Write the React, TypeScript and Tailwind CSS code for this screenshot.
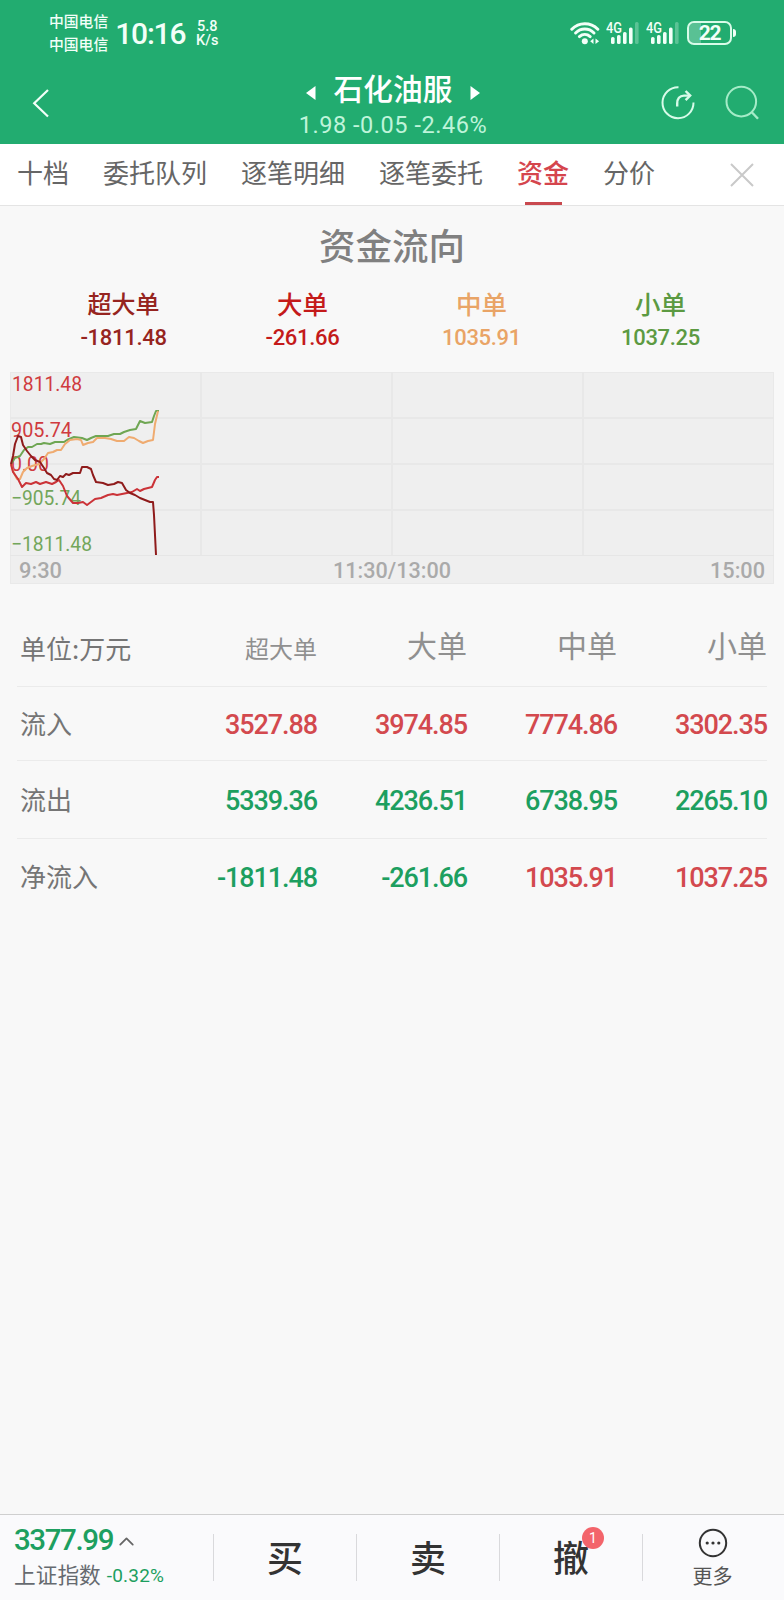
import { ChevronUp } from 'lucide-react';

interface FlowItem {
  name: string;
  net: string;
  inflow: string;
  outflow: string;
  color: string;
  nameSize: string;
  headSize: string;
}

const flows: FlowItem[] = [
  { name: '超大单', net: '-1811.48', inflow: '3527.88', outflow: '5339.36', color: 'text-[#962420]', nameSize: 'text-[24px]', headSize: 'text-[24px] pt-[1px]' },
  { name: '大单', net: '-261.66', inflow: '3974.85', outflow: '4236.51', color: 'text-[#c41a1a]', nameSize: 'text-[25.5px]', headSize: 'text-[30px] pb-[6px]' },
  { name: '中单', net: '1035.91', inflow: '7774.86', outflow: '6738.95', color: 'text-[#e9a466]', nameSize: 'text-[25.5px]', headSize: 'text-[30px] pb-[6px]' },
  { name: '小单', net: '1037.25', inflow: '3302.35', outflow: '2265.10', color: 'text-[#5c9a42]', nameSize: 'text-[25.5px]', headSize: 'text-[30px] pb-[6px]' },
];

const tabs = ['十档', '委托队列', '逐笔明细', '逐笔委托', '资金', '分价'];

const latin = "font-['Roboto','Noto_Sans_CJK_SC',sans-serif]";

const Signal = () => (
  <svg width="34" height="26" viewBox="0 0 34 26" fill="#f2fff8">
    <text x="0" y="12.5" fontSize="14.5" fontWeight="500" textLength="16" lengthAdjust="spacingAndGlyphs" className={latin}>4G</text>
    <rect x="5" y="17" width="3.6" height="7" rx="1.6" />
    <rect x="11" y="15" width="3.6" height="9" rx="1.6" />
    <rect x="17" y="12" width="3.6" height="12" rx="1.6" />
    <rect x="23" y="7.5" width="3.6" height="16.5" rx="1.6" />
    <rect x="29" y="2" width="3.6" height="22" rx="1.6" opacity="0.28" />
  </svg>
);

const StatusBar = () => (
  <div className="flex h-[66px] items-center pl-[49px] pr-[48px] text-[#f2fff8]">
    <div className="-mt-[2px] flex flex-col text-[14.8px] font-medium leading-[23px]">
      <span>中国电信</span>
      <span>中国电信</span>
    </div>
    <span className={`${latin} ml-[7px] mt-[2px] w-[72px] text-[30px] font-medium leading-[36px] tracking-[-1.2px]`}>10:16</span>
    <div className={`${latin} ml-[8px] mt-[2px] flex w-[24px] flex-col items-center text-[14.5px] font-medium leading-[14px]`}>
      <span>5.8</span>
      <span>K/s</span>
    </div>
    <div className="ml-auto flex items-center">
      <svg width="30" height="26" viewBox="0 0 30 26" fill="none" stroke="#f2fff8" strokeWidth="3" strokeLinecap="round">
        <path d="M1.8 9.2C9 1.8 20.5 1.8 27.8 9.2" />
        <path d="M5.6 13C11 7.8 18.6 7.8 24 13" />
        <path d="M9.4 16.6C12.6 13.8 17 13.8 20.2 16.6" />
        <circle cx="14.8" cy="21.2" r="3" fill="#f2fff8" stroke="none" />
        <path d="M23.5 18.5v5.5l-3.3-2.7zM25.5 18.5v5.5l3.6-2.7z" fill="#f2fff8" stroke="none" />
      </svg>
      <div className="ml-[6px] flex gap-[6px]">
        <Signal />
        <Signal />
      </div>
      <div className="ml-[7px] flex items-center">
        <div className="relative flex h-[24px] w-[45px] items-center justify-center overflow-hidden rounded-[7px] border-2 border-[#d8fbe8]">
          <div className="absolute left-0 top-0 h-full w-[12px] bg-white/25" />
          <span className={`${latin} relative text-[21px] font-bold leading-[22px] tracking-[-1.2px]`}>22</span>
        </div>
        <div className="ml-[1px] h-[8px] w-[3px] rounded-r-[3px] bg-[#f2fff8]" />
      </div>
    </div>
  </div>
);

const StockHeader = () => (
  <div className="flex h-[78px] items-start justify-between pl-[32px] pr-[23px]">
    <div className="w-[94px] pt-[22px]">
      <svg width="20" height="30" viewBox="0 0 20 30" fill="none" stroke="#f2fff8" strokeWidth="2.2">
        <path d="M16 2L2.2 15.3L16 28.5" />
      </svg>
    </div>
    <div className="flex flex-col items-center">
      <div className="flex items-center gap-[18px] text-white">
        <svg width="10" height="14" viewBox="0 0 10 14" className="mt-[11px]"><path d="M9.5 0V14L0 7z" fill="currentColor" /></svg>
        <h1 className="text-[29.7px] font-medium leading-[43px]">石化油服</h1>
        <svg width="10" height="14" viewBox="0 0 10 14" className="mt-[11px]"><path d="M.5 0V14L10 7z" fill="currentColor" /></svg>
      </div>
      <div className={`${latin} mt-[2px] text-[23.5px] leading-[28px] tracking-[0.55px] text-[#bff4da]`}>1.98 -0.05 -2.46%</div>
    </div>
    <div className="flex gap-[29px] pt-[19px]">
      <svg width="36" height="36" viewBox="0 0 36 36" fill="none" stroke="#d8fbe9" strokeWidth="2">
        <path d="M18.5 2.2A15.5 15.5 0 1 0 33.5 17.5" />
        <path d="M17.2 21.5V18.5C17.2 13.5 19.5 10.6 24 10.6H30" strokeWidth="2.4" />
        <path d="M25.6 6L30.2 10.6L25.6 15.2" strokeWidth="2.4" />
      </svg>
      <svg width="36" height="36" viewBox="0 0 36 36" fill="none" stroke="#a5ecc8" strokeWidth="2">
        <circle cx="16.3" cy="16.6" r="14.8" />
        <path d="M26.8 27.2L33 33.8" strokeWidth="2.4" />
      </svg>
    </div>
  </div>
);

const TabBar = () => (
  <nav className="flex h-[62px] border-b border-[#e4e4e4] bg-white pl-[17px] pr-[30px] text-[26px] text-[#666]">
    <div className="flex gap-[34px]">
      {tabs.map((tab) => {
        const active = tab === '资金';
        return (
          <div key={tab} className={`flex flex-col items-center whitespace-nowrap ${active ? 'font-medium text-[#d5454d]' : ''}`}>
            <span className="h-[58px] leading-[56px]">{tab}</span>
            {active && <span className="h-[3px] w-[37px] bg-[#c9494f]" />}
          </div>
        );
      })}
    </div>
    <svg width="24" height="24" viewBox="0 0 24 24" className="ml-auto mt-[19px]" stroke="#c9c9c9" strokeWidth="2">
      <path d="M1 1L23 23M23 1L1 23" />
    </svg>
  </nav>
);

const FlowChart = () => (
  <svg width="764" height="213" viewBox="10 372 764 213" fill="none" className={`mx-[10px] block ${latin}`}>
    <rect x="10.5" y="372.5" width="763" height="211" fill="#efefef" stroke="#e9e9e9" />
    <path d="M10 418H774M10 464H774M10 510H774M201 372V555M392 372V555M583 372V555" stroke="#e8e8e8" strokeWidth="2" />
    <path d="M10 555.5H774" stroke="#e6e6e6" />

    {/* value labels */}
    <g fontSize="21" fill="#d03b3e">
      <text x="12" y="391" textLength="70" lengthAdjust="spacingAndGlyphs">1811.48</text>
      <text x="11" y="437" textLength="61" lengthAdjust="spacingAndGlyphs">905.74</text>
      <text x="11" y="471" textLength="38" lengthAdjust="spacingAndGlyphs">0.00</text>
    </g>
    <g fontSize="21" fill="#73a65b">
      <text x="11" y="505" textLength="70" lengthAdjust="spacingAndGlyphs">−905.74</text>
      <text x="11" y="551" textLength="81" lengthAdjust="spacingAndGlyphs">−1811.48</text>
    </g>

    {/* order flow lines */}
    <g strokeWidth="2" strokeLinejoin="round">
      <path stroke="#6fa653" d="M11 464L15 458L20 456L24 450L28 447L32 447L37 444L41 444L44 443L50 444L55 442L60 442L64 442L67 440L74 437L82 438L87 440L91 438L96 436L108 436L114 434L120 434L124 432L130 430L136 429L140 421L145 423L152 422L154 416L156 411L159 411" />
      <path stroke="#efab70" d="M11 464L13 471L17 479L20 479L23 472L27 468L32 466L39 464L44 459L48 453L53 452L57 450L61 450L65 444L70 440L77 439L81 440L83 445L88 443L93 442L97 438L105 438L111 439L117 441L124 441L129 437L134 438L139 441L143 443L148 441L153 440L155 424L158 411" />
      <path stroke="#cb3338" d="M11 464L13 472L18 479L22 487L26 483L31 484L36 482L40 484L46 482L52 484L56 482L59 480L63 486L67 496L73 503L78 503L83 502L87 505L91 502L95 499L101 498L108 495L113 494L117 495L122 494L127 493L132 492L137 489L140 491L144 489L148 488L152 487L155 480L157 477L159 477" />
      <path stroke="#8f1b1b" d="M11 464L13 456L15 444L18 436L21 437L23 445L27 451L31 456L35 460L40 462L44 468L47 473L51 475L54 479L57 480L60 476L63 477L66 474L69 475L73 473L80 473L82 467L87 467L91 469L93 475L96 482L103 483L108 485L114 484L118 482L122 483L126 490L130 493L135 495L140 498L145 500L150 502L153 502L154 515L156 555" />
    </g>

    <g fontSize="21.5" fontWeight="500" fill="#aaa">
      <text x="19" y="578" textLength="43" lengthAdjust="spacingAndGlyphs">9:30</text>
      <text x="333" y="578" textLength="118" lengthAdjust="spacingAndGlyphs">11:30/13:00</text>
      <text x="710" y="578" textLength="55" lengthAdjust="spacingAndGlyphs">15:00</text>
    </g>
  </svg>
);

const toneOf = (value: string) => (value.startsWith('-') ? 'text-[#1d9f60]' : 'text-[#d3494e]');

const FlowTable = () => {
  const rows = [
    { label: '流入', height: 'h-[74px]', cells: flows.map((f) => ({ value: f.inflow, tone: 'text-[#d3494e]' })) },
    { label: '流出', height: 'h-[78px]', cells: flows.map((f) => ({ value: f.outflow, tone: 'text-[#1d9f60]' })) },
    { label: '净流入', height: 'h-[75px]', cells: flows.map((f) => ({ value: f.net, tone: toneOf(f.net) })) },
  ];

  return (
    <section className="mx-[17px] mt-[24px] text-[26px] text-[#757575]">
      <div className="flex h-[78px] items-center border-b border-[#ebebeb] pl-[3px]">
        <span className="flex-1 pb-[1px]">单位:万元</span>
        {flows.map((f) => (
          <span key={f.name} className={`w-[150px] text-right text-[#909090] ${f.headSize}`}>{f.name}</span>
        ))}
      </div>
      {rows.map((row) => (
        <div key={row.label} className={`flex items-center border-b border-[#ebebeb] pl-[3px] last:border-b-0 ${row.height}`}>
          <span className="flex-1 pb-[3px]">{row.label}</span>
          {row.cells.map((cell) => (
            <span key={cell.value} className={`${latin} w-[150px] pt-[4px] text-right text-[27px] font-medium tracking-[-1.1px] ${cell.tone}`}>{cell.value}</span>
          ))}
        </div>
      ))}
    </section>
  );
};

const BottomBar = () => (
  <footer className="flex h-[86px] border-t border-[#cfcfcf] bg-[#fafafc]">
    <div className="flex w-[213px] flex-col pl-[14px] pt-[6px]">
      <div className="flex items-center">
        <span className={`${latin} text-[29.5px] font-medium leading-[38px] tracking-[-1.4px] text-[#1d9f60]`}>3377.99</span>
        <ChevronUp size={25} strokeWidth={1.7} className="ml-px mt-[3px] text-[#666]" />
      </div>
      <div className="-mt-[1px] flex items-center whitespace-nowrap">
        <span className="text-[21.7px] leading-[30px] text-[#666a70]">上证指数</span>
        <span className={`${latin} ml-[6px] pt-[4px] text-[19px] tracking-[0.2px] text-[#1d9f60]`}>-0.32%</span>
      </div>
    </div>
    {['买', '卖', '撤'].map((action) => (
      <div key={action} className="mt-[19px] flex h-[47px] w-[143px] items-center justify-center border-l border-[#d9d9dc] text-[36px] font-medium text-[#333]">
        <span className="relative -mt-[4px] leading-[50px]">
          {action}
          {action === '撤' && (
            <span className={`${latin} absolute -right-[15px] -top-[4px] flex h-[22px] w-[22px] items-center justify-center rounded-full bg-[#f3646b] text-[14px] font-normal leading-none text-white`}>1</span>
          )}
        </span>
      </div>
    ))}
    <div className="mt-[19px] flex h-[47px] flex-1 border-l border-[#d9d9dc]">
      <div className="-mt-[6px] flex flex-1 flex-col items-center pr-[2px]">
        <svg width="30" height="30" viewBox="0 0 30 30" className="shrink-0" fill="none" stroke="#333" strokeWidth="2">
          <circle cx="15" cy="15" r="13.2" />
          <g fill="#333" stroke="none">
            <circle cx="9.2" cy="15" r="1.6" />
            <circle cx="15" cy="15" r="1.6" />
            <circle cx="20.8" cy="15" r="1.6" />
          </g>
        </svg>
        <span className="mt-[4px] text-[20px] leading-[28px] text-[#555]">更多</span>
      </div>
    </div>
  </footer>
);

export default function App() {
  return (
    <div className="flex h-[1600px] w-[784px] flex-col overflow-hidden bg-[#f8f8f8] font-['Noto_Sans_CJK_SC',sans-serif]">
      <header className="h-[144px] bg-[#22ac70]">
        <StatusBar />
        <StockHeader />
      </header>
      <TabBar />
      <main className="flex-1">
        <h2 className="mt-[12px] text-center text-[36.5px] font-medium leading-[54px] text-[#808080]">资金流向</h2>
        <div className="mx-[34px] mt-[13px] flex h-[87px]">
          {flows.map((f) => (
            <div key={f.name} className={`flex flex-1 flex-col items-center font-medium ${f.color}`}>
              <span className={`leading-[36px] ${f.nameSize}`}>{f.name}</span>
              <span className={`${latin} mt-[1px] text-[22px] leading-[32px] tracking-[-0.3px]`}>{f.net}</span>
            </div>
          ))}
        </div>
        <FlowChart />
        <FlowTable />
      </main>
      <BottomBar />
    </div>
  );
}
